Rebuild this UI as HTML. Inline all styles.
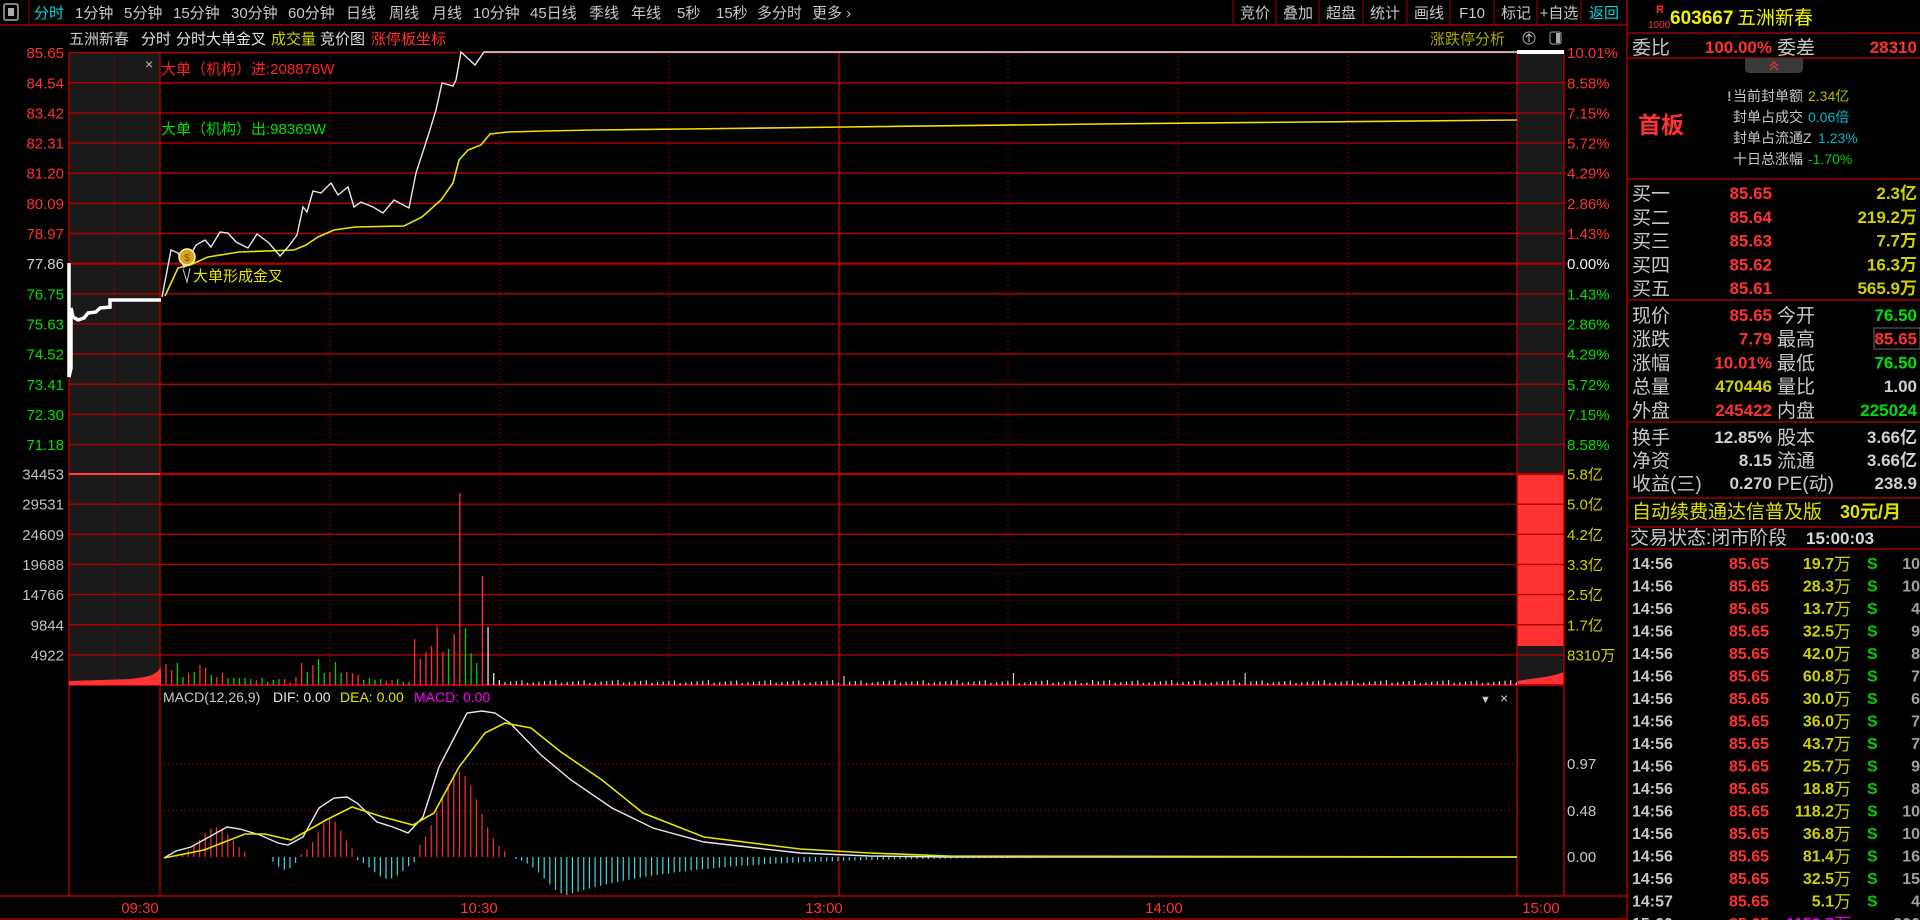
<!DOCTYPE html>
<html><head><meta charset="utf-8">
<style>
html,body{margin:0;padding:0;background:#000;width:1920px;height:920px;overflow:hidden}
svg{display:block}
text{font-family:"Liberation Sans","Noto Sans CJK SC",sans-serif}
</style></head>
<body>
<svg id="s" width="1920" height="920" viewBox="0 0 1920 920" xmlns="http://www.w3.org/2000/svg">
<rect width="1920" height="920" fill="#000"/>
<rect x="69" y="52" width="91" height="633" fill="#1a1a1a"/>
<rect x="1517" y="52" width="47" height="633" fill="#1a1a1a"/>
<rect x="1517" y="474" width="47" height="172" fill="#ff3333"/>
<polygon points="1517,685 1517,681 1530,679 1545,677 1555,675 1564,672 1564,685" fill="#ff3333"/>
<g id="grid"></g>
<g id="bars"></g>

<line x1="0" y1="25" x2="1628" y2="25" stroke="#a00000" stroke-width="1.5"/>
<rect x="4" y="4" width="14" height="16" rx="2" fill="none" stroke="#aaa" stroke-width="1.5"/>
<rect x="8" y="8" width="6" height="8" fill="#aaa"/>
<line x1="29" y1="0" x2="29" y2="25" stroke="#a00000"/>
<g font-size="15" fill="#c8c8c8">
<text x="34" y="18" fill="#00d8d8">分时</text>
<text x="75" y="18">1分钟</text><text x="124" y="18">5分钟</text><text x="173" y="18">15分钟</text>
<text x="231" y="18">30分钟</text><text x="288" y="18">60分钟</text><text x="346" y="18">日线</text>
<text x="389" y="18">周线</text><text x="432" y="18">月线</text><text x="473" y="18">10分钟</text>
<text x="530" y="18">45日线</text><text x="589" y="18">季线</text><text x="631" y="18">年线</text>
<text x="677" y="18">5秒</text><text x="716" y="18">15秒</text><text x="757" y="18">多分时</text>
<text x="812" y="18">更多 ›</text>
</g>
<g stroke="#a00000" stroke-width="1">
<line x1="1233" y1="0" x2="1233" y2="25"/><line x1="1276" y1="0" x2="1276" y2="25"/>
<line x1="1319" y1="0" x2="1319" y2="25"/><line x1="1363" y1="0" x2="1363" y2="25"/>
<line x1="1407" y1="0" x2="1407" y2="25"/><line x1="1450" y1="0" x2="1450" y2="25"/>
<line x1="1494" y1="0" x2="1494" y2="25"/><line x1="1537" y1="0" x2="1537" y2="25"/>
<line x1="1581" y1="0" x2="1581" y2="25"/>
</g>
<g font-size="15" fill="#c8c8c8" text-anchor="middle">
<text x="1255" y="18">竞价</text><text x="1298" y="18">叠加</text><text x="1341" y="18">超盘</text>
<text x="1385" y="18">统计</text><text x="1429" y="18">画线</text><text x="1472" y="18">F10</text>
<text x="1516" y="18">标记</text><text x="1559" y="18">+自选</text><text x="1604" y="18" fill="#00d8d8">返回</text>
</g>

<g font-size="15">
<text x="69" y="44" fill="#c8c8c8">五洲新春</text>
<text x="141" y="44" fill="#e0e0e0">分时</text>
<text x="176" y="44" fill="#e0e0e0">分时大单金叉</text>
<text x="271" y="44" fill="#d0d000">成交量</text>
<text x="320" y="44" fill="#e0e0e0">竞价图</text>
<text x="371" y="44" fill="#ff3232">涨停板坐标</text>
<text x="1430" y="44" fill="#a8a800">涨跌停分析</text>
</g>
<circle cx="1529" cy="38" r="6" fill="none" stroke="#aaa"/><path d="M1529 42V34M1526 37L1529 34L1532 37" stroke="#ccc" fill="none"/>
<rect x="1550" y="32" width="11" height="12" rx="2" fill="none" stroke="#aaa"/><rect x="1556" y="33" width="4" height="10" fill="#aaa"/>

<text x="145" y="69" font-size="14" fill="#bbb">×</text>
<text x="161" y="74" font-size="15" fill="#ff2020">大单（机构）进:208876W</text>
<text x="161" y="134" font-size="15" fill="#00e000">大单（机构）出:98369W</text>
<text x="193" y="281" font-size="15" fill="#e6e600">大单形成金叉</text>

<polyline fill="none" stroke="#fff" stroke-width="3.5" points="69,263 69,377 71,368 71,308 73,317 78,320 84,318 88,313 96,312 100,308 110,307 110,300 161,300"/>
<polyline fill="none" stroke="#e6e600" stroke-width="1.6" points="165,296 178,268 190,265 208,257 239,252 294,250 306,245 318,237 334,230 355,227 404,226 422,217 441,200 453,183 459,160 468,150 481,145 490,134 508,132 545,131 594,130 686,129 845,127 1100,124 1517,120"/>
<polyline fill="none" stroke="#e8e8e8" stroke-width="1.4" points="162,297 171,250 178,253 184,267 196,245 205,240 211,247 220,232 228,233 236,242 248,248 257,234 269,243 280,256 288,247 297,235 303,207 307,212 313,191 321,193 331,183 338,195 348,187 354,207 361,202 373,207 383,213 394,200 409,208 416,173 429,133 436,110 442,83 453,86 456,80 461,52 475,65 484,52 1517,52"/>
<line x1="1517" y1="52" x2="1564" y2="52" stroke="#fff" stroke-width="4"/>
<circle cx="187" cy="257" r="8" fill="#d9a520" stroke="#fff3a0" stroke-width="1.5"/>
<text x="187" y="261" font-size="10" fill="#7a4a00" text-anchor="middle">$</text>
<path d="M183 269L187 282L190 268" stroke="#ccc" fill="none"/>

<line x1="69" y1="474" x2="160" y2="474" stroke="#ff4040" stroke-width="2"/>
<polygon points="69,685 69,681 100,680 130,679 145,677 152,675 157,672 161,667 161,685" fill="#ff3333"/>

<g font-size="14">
<text x="163" y="702" fill="#c8c8c8">MACD(12,26,9)</text>
<text x="273" y="702" fill="#e8e8e8">DIF: 0.00</text>
<text x="340" y="702" fill="#e6e600">DEA: 0.00</text>
<text x="414" y="702" fill="#ff00ff">MACD: 0.00</text>
<text x="1480" y="703" fill="#ccc" font-size="11">▼</text>
<text x="1500" y="703" fill="#ccc">×</text>
</g>
<g id="macd"></g>
<polyline fill="none" stroke="#e8e8e8" stroke-width="1.4" points="164,858 176,851 191,847 209,837 227,827 240,829 260,835 278,843 288,845 303,837 319,808 334,798 347,797 357,803 377,822 393,827 408,833 423,817 439,767 454,738 467,713 482,711 495,713 510,723 541,755 571,780 612,808 653,828 704,842 800,853 870,856 948,857 1517,857"/>
<polyline fill="none" stroke="#e6e600" stroke-width="1.6" points="164,858 204,850 245,834 265,834 291,840 326,820 352,807 383,817 413,825 434,813 459,767 485,733 505,723 531,728 561,752 602,780 643,813 704,837 800,849 870,853 948,856 1517,857"/>

<g id="labels" font-size="15"></g>
<g font-size="15" fill="#ff3232">
<text x="140" y="913" text-anchor="middle">09:30</text>
<text x="479" y="913" text-anchor="middle">10:30</text>
<text x="824" y="913" text-anchor="middle">13:00</text>
<text x="1164" y="913" text-anchor="middle">14:00</text>
<text x="1541" y="913" text-anchor="middle">15:00</text>
</g>
<g fill="#c8c8c8" font-size="15">
<text x="1567" y="769">0.97</text><text x="1567" y="816">0.48</text><text x="1567" y="862">0.00</text>
</g>

<line x1="1627" y1="0" x2="1627" y2="920" stroke="#a00000" stroke-width="1.5"/>
<g stroke="#a00000" stroke-width="1.5">
<line x1="1627" y1="33" x2="1920" y2="33"/><line x1="1627" y1="58" x2="1920" y2="58"/>
<line x1="1627" y1="179" x2="1920" y2="179"/><line x1="1627" y1="300" x2="1920" y2="300"/>
<line x1="1627" y1="422" x2="1920" y2="422"/><line x1="1627" y1="498" x2="1920" y2="498"/>
<line x1="1627" y1="527" x2="1920" y2="527"/><line x1="1627" y1="549" x2="1920" y2="549"/>
</g>
<text x="1656" y="13" font-size="11" fill="#ff3232" font-weight="bold">R</text>
<text x="1648" y="28" font-size="10" fill="#ff3232">1000</text>
<text x="1670" y="24" font-size="19" fill="#f0f000" font-weight="bold">603667</text>
<text x="1737" y="24" font-size="19" fill="#f0f000">五洲新春</text>
<g font-size="19" fill="#c8c8c8">
<text x="1632" y="54">委比</text><text x="1777" y="54">委差</text>
</g>
<g font-size="17" font-weight="bold" fill="#ff3232" text-anchor="end">
<text x="1772" y="53">100.00%</text><text x="1917" y="53">28310</text>
</g>
<path d="M1745 58H1803V68Q1803 73 1798 73H1750Q1745 73 1745 68Z" fill="#3a3a3a"/>
<path d="M1770 66L1774 62L1778 66M1770 70L1774 66L1778 70" stroke="#ff3232" fill="none" stroke-width="1.2"/>
<text x="1638" y="133" font-size="23" font-weight="bold" fill="#ff3232">首板</text>
<g font-size="14" fill="#c8c8c8">
<text x="1727" y="101" fill="#aaa" font-weight="bold">!</text>
<text x="1733" y="101">当前封单额</text>
<text x="1733" y="122">封单占成交</text>
<text x="1733" y="143">封单占流通Z</text>
<text x="1733" y="164">十日总涨幅</text>
<text x="1808" y="101" fill="#b8b800">2.34亿</text>
<text x="1808" y="122" fill="#00b8d0">0.06倍</text>
<text x="1818" y="143" fill="#00b8d0">1.23%</text>
<text x="1808" y="164" fill="#00d000">-1.70%</text>
</g>
<g id="panel"></g>
<rect x="1874" y="328" width="46" height="21" fill="none" stroke="#666"/>
<text x="1632" y="518" font-size="19" fill="#e0e000">自动续费通达信普及版</text>
<text x="1840" y="518" font-size="18" fill="#e0e000" font-weight="bold">30元/月</text>
<text x="1630" y="544" font-size="19" fill="#c8c8c8">交易状态:闭市阶段</text>
<text x="1806" y="544" font-size="17" fill="#d8d8d8" font-weight="bold">15:00:03</text>
<g id="ticks" font-size="16" font-weight="bold"></g>
</svg>
<script>
var NS="http://www.w3.org/2000/svg";
function el(p,t,a,txt){var e=document.createElementNS(NS,t);for(var k in a)e.setAttribute(k,a[k]);if(txt!=null)e.textContent=txt;document.getElementById(p).appendChild(e);return e;}
var R="#b00000";
for(var k=0;k<14;k++){var y=52.6+30.15*k;el("grid","line",{x1:69,y1:y,x2:1564,y2:y,stroke:R,"stroke-width":k==7?2.2:1.4});}
for(var k=0;k<7;k++){var y=474+30.15*k;el("grid","line",{x1:69,y1:y,x2:1564,y2:y,stroke:R,"stroke-width":k==0?2.2:1.4});}
el("grid","line",{x1:69,y1:685,x2:1564,y2:685,stroke:R,"stroke-width":2});
el("grid","line",{x1:0,y1:896,x2:1627,y2:896,stroke:R,"stroke-width":1.5});
el("grid","line",{x1:0,y1:919,x2:1627,y2:919,stroke:R,"stroke-width":1.5});
[764,810.6].forEach(function(y){el("grid","line",{x1:160,y1:y,x2:1517,y2:y,stroke:"#a00000","stroke-dasharray":"1.5 2.5"});});
[69,160,839,1517,1564].forEach(function(x){el("grid","line",{x1:x,y1:52,x2:x,y2:896,stroke:R,"stroke-width":1.4});});
[114.5,330,499.6,669,1008,1178,1348].forEach(function(x){el("grid","line",{x1:x,y1:52,x2:x,y2:685,stroke:"#a00000","stroke-dasharray":"1.5 2.5"});});
var L=["85.65","84.54","83.42","82.31","81.20","80.09","78.97","77.86","76.75","75.63","74.52","73.41","72.30","71.18"];
var P=["10.01%","8.58%","7.15%","5.72%","4.29%","2.86%","1.43%","0.00%","1.43%","2.86%","4.29%","5.72%","7.15%","8.58%"];
for(var k=0;k<14;k++){var y=52.6+30.15*k+5.5;var c=k<7?"#ff3232":(k==7?"#d0d0d0":"#00e000");
el("labels","text",{x:64,y:y,fill:c,"text-anchor":"end"},L[k]);el("labels","text",{x:1567,y:y,fill:c=="#d0d0d0"?"#f0f0f0":c},P[k]);}
var V=["34453","29531","24609","19688","14766","9844","4922"],VR=["5.8亿","5.0亿","4.2亿","3.3亿","2.5亿","1.7亿","8310万"];
for(var k=0;k<7;k++){var y=474+30.15*k+5.5;el("labels","text",{x:64,y:y,fill:"#c0c0c0","text-anchor":"end"},V[k]);el("labels","text",{x:1567,y:y,fill:"#d0d000"},VR[k]);}
var vb=[["r",21],["r",15],["g",22],["g",8],["r",12],["g",13],["r",20],["r",17],["g",10],["r",8],["r",12],["g",7],["g",7],["g",7],["g",7],["g",6],["r",5],["g",7],["g",3],["g",5],["g",6],["r",6],["r",3],["r",8],["r",22],["g",13],["r",20],["g",26],["g",12],["r",13],["g",23],["g",12],["r",13],["r",12],["r",10],["g",5],["g",7],["g",5],["g",6],["r",4],["r",5],["g",6],["g",3],["g",3],["r",46],["r",26],["r",33],["r",39],["r",58],["r",33],["g",36],["r",51],["r",192],["g",57],["g",32],["g",22],["r",109],["w",58],["w",12],["w",5]];
var col={r:"#ff3030",g:"#00d000",w:"#e0e0e0"};
for(var i=0;i<vb.length;i++){var x=166+5.65*i;el("bars","line",{x1:x,y1:685,x2:x,y2:685-vb[i][1],stroke:col[vb[i][0]],"stroke-width":1.3});}
for(var x=166+5.65*vb.length;x<1517;x+=5.65){var h=2+((x*7)%3);if(Math.abs(x-846)<3)h=9;if(Math.abs(x-1014)<3)h=12;if(Math.abs(x-1247)<3)h=12;if(Math.abs(x-1090)<3)h=5;
el("bars","line",{x1:x,y1:685,x2:x,y2:685-h,stroke:"#d0d0d0","stroke-width":1.2});}
function g(x,c,w){return Math.exp(-Math.pow((x-c)/w,2));}
for(var i=1;i<240;i++){var x=160+5.65*i;var v=0;
if(x<250)v=30*g(x,216,22);else if(x<272)v=0;else if(x<298)v=-13*g(x,285,12);
else if(x<356)v=38*g(x,330,18);else if(x<417)v=-22*g(x,388,22);else if(x<508)v=85*g(x,459,28);
else if(x<514)v=0;
else v=-38*Math.exp(-Math.pow(Math.max(0,567-x)/30,2))*Math.exp(-Math.max(0,x-567)/120);
if(Math.abs(v)<0.6)continue;
el("macd","line",{x1:x,y1:857,x2:x,y2:857-v,stroke:v>0?"#ff3030":"#40d8e0","stroke-width":1.2});}
var rows=[["买一","85.65","#ff3232","","2.3亿","#d0d000"],["买二","85.64","#ff3232","","219.2万","#d0d000"],["买三","85.63","#ff3232","","7.7万","#d0d000"],["买四","85.62","#ff3232","","16.3万","#d0d000"],["买五","85.61","#ff3232","","565.9万","#d0d000"]];
for(var i=0;i<5;i++){var y=193+23.75*i+7;var r=rows[i];
el("panel","text",{x:1632,y:y,"font-size":19,fill:"#c8c8c8"},r[0]);
el("panel","text",{x:1772,y:y-1,"font-size":17,"font-weight":"bold",fill:r[2],"text-anchor":"end"},r[1]);
el("panel","text",{x:1917,y:y-1,"font-size":17,"font-weight":"bold",fill:r[5],"text-anchor":"end"},r[4]);}
var r2=[["现价","85.65","#ff3232","今开","76.50","#00e000"],["涨跌","7.79","#ff3232","最高","85.65","#ff3232"],["涨幅","10.01%","#ff3232","最低","76.50","#00e000"],["总量","470446","#d0d000","量比","1.00","#d0d0d0"],["外盘","245422","#ff3232","内盘","225024","#00e000"],
["换手","12.85%","#d0d0d0","股本","3.66亿","#d0d0d0"],["净资","8.15","#d0d0d0","流通","3.66亿","#d0d0d0"],["收益(三)","0.270","#d0d0d0","PE(动)","238.9","#d0d0d0"]];
for(var i=0;i<8;i++){var y=(i<5?315+23.7*i:437+23*(i-5))+7;var r=r2[i];
el("panel","text",{x:1632,y:y,"font-size":19,fill:"#c8c8c8"},r[0]);
el("panel","text",{x:1772,y:y-1,"font-size":17,"font-weight":"bold",fill:r[2],"text-anchor":"end"},r[1]);
el("panel","text",{x:1777,y:y,"font-size":19,fill:"#c8c8c8"},r[3]);
el("panel","text",{x:1917,y:y-1,"font-size":17,"font-weight":"bold",fill:r[5],"text-anchor":"end"},r[4]);}
var tv=["19.7","28.3","13.7","32.5","42.0","60.8","30.0","36.0","43.7","25.7","18.8","118.2","36.8","81.4","32.5","5.1"];
var tn=["10","10","4","9","8","7","6","7","7","9","8","10","10","16","15","4"];
for(var i=0;i<17;i++){var y=563+22.5*i+6;
var last=i==16;
el("ticks","text",{x:1632,y:y,fill:"#c8c8c8"},last?"15:00":(i==15?"14:57":"14:56"));
el("ticks","text",{x:1769,y:y,fill:"#ff3232","text-anchor":"end"},"85.65");
el("ticks","text",{x:1834,y:y,fill:last?"#e000e0":"#d0d000","text-anchor":"end"},last?"1152.7":tv[i]);
el("ticks","text",{x:1834,y:y+1,fill:last?"#e000e0":"#d0d000","font-weight":"normal","font-size":17},"万");
if(!last)el("ticks","text",{x:1867,y:y,fill:"#00d000"},"S");
el("ticks","text",{x:1920,y:y,fill:"#a0a0a0","text-anchor":"end"},last?"300":tn[i]);}
</script>
</body></html>
